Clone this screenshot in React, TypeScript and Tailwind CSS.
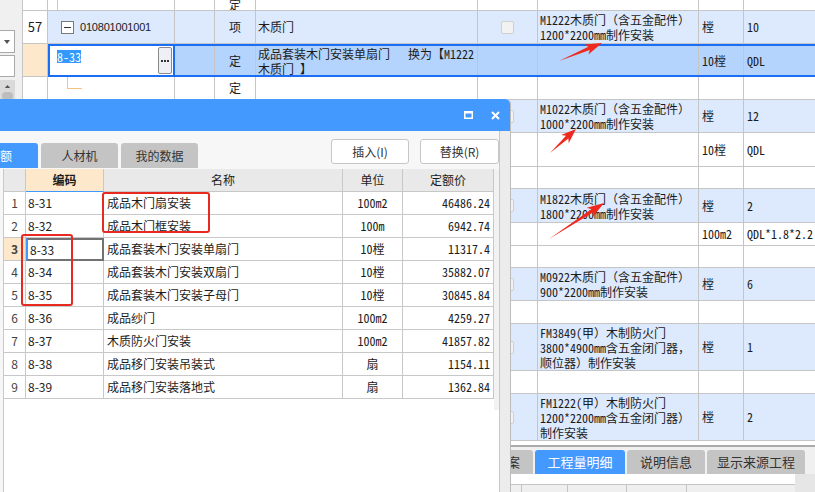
import React from 'react';

const SONG = "font-['Noto_Sans_Mono_CJK_SC','Liberation_Mono','Noto_Sans_CJK_SC',monospace]";
const HEI = "font-['Noto_Sans_CJK_SC','Noto_Sans',sans-serif]";
const LINE = 'border-[#c5c5c5]';
const BLUE_ROW = 'bg-[#dde9fc]';

// main grid column widths
const cols = ['w-[25px]', 'w-[127px]', 'w-[40px]', 'w-[41px]', 'w-[222px]', 'w-[60px]', 'w-[161px]', 'w-[45px]'];

type CellProps = { w: string; className?: string; children?: React.ReactNode };

function Cell({ w, className = '', children }: CellProps) {
  return (
    <div className={`${w} shrink-0 h-full border-r ${LINE} flex items-center overflow-hidden ${className}`}>
      {children}
    </div>
  );
}

const Check = () => <div className="w-[13px] h-[13px] rounded-[2px] border border-[#d0d0d0] bg-[#f2f2f2]" />;

type GRow = { h: string; blue?: boolean; desc?: string[]; unit?: string; qty?: string };

const lower: GRow[] = [
  { h: 'h-[33px]', blue: true, desc: ['M1022木质门（含五金配件）', '1000*2200mm制作安装'], unit: '樘', qty: '12' },
  { h: 'h-[34px]', unit: '10樘', qty: 'QDL' },
  { h: 'h-[22px]' },
  { h: 'h-[34px]', blue: true, desc: ['M1822木质门（含五金配件）', '1800*2200mm制作安装'], unit: '樘', qty: '2' },
  { h: 'h-[23px]', unit: '100m2', qty: 'QDL*1.8*2.2' },
  { h: 'h-[22px]' },
  { h: 'h-[33px]', blue: true, desc: ['M0922木质门（含五金配件）', '900*2200mm制作安装'], unit: '樘', qty: '6' },
  { h: 'h-[23px]' },
  { h: 'h-[47px]', blue: true, desc: ['FM3849(甲）木制防火门', '3800*4900mm含五金闭门器，', '顺位器）制作安装'], unit: '樘', qty: '1' },
  { h: 'h-[23px]' },
  { h: 'h-[47px]', blue: true, desc: ['FM1222(甲）木制防火门', '1200*2200mm含五金闭门器）', '制作安装'], unit: '樘', qty: '2' },
];

const items = [
  ['8-31', '成品木门扇安装', '100m2', '46486.24'],
  ['8-32', '成品木门框安装', '100m', '6942.74'],
  ['8-33', '成品套装木门安装单扇门', '10樘', '11317.4'],
  ['8-34', '成品套装木门安装双扇门', '10樘', '35882.07'],
  ['8-35', '成品套装木门安装子母门', '10樘', '30845.84'],
  ['8-36', '成品纱门', '100m2', '4259.27'],
  ['8-37', '木质防火门安装', '100m2', '41857.82'],
  ['8-38', '成品移门安装吊装式', '扇', '1154.11'],
  ['8-39', '成品移门安装落地式', '扇', '1362.84'],
];

const dcols = ['w-[22px]', 'w-[78px]', 'w-[239px]', 'w-[60px]', 'w-[91px]'];
const DL = 'border-[#c8c8c8]';

function arrow(x1: number, y1: number, x2: number, y2: number, head = 14) {
  const dx = x2 - x1;
  const dy = y2 - y1;
  const L = Math.hypot(dx, dy);
  const ux = dx / L;
  const uy = dy / L;
  const nx = -uy;
  const ny = ux;
  const bx = x2 - ux * head;
  const by = y2 - uy * head;
  const cx = x2 - ux * (head + 3);
  const cy = y2 - uy * (head + 3);
  const p = (x: number, y: number) => `${x.toFixed(1)},${y.toFixed(1)}`;
  return [
    p(x1, y1),
    p(bx + nx * 1.8, by + ny * 1.8),
    p(cx + nx * 5.5, cy + ny * 5.5),
    p(x2, y2),
    p(cx - nx * 5.5, cy - ny * 5.5),
    p(bx - nx * 1.8, by - ny * 1.8),
  ].join(' ');
}

function LeftPanel() {
  return (
    <div className={`w-[23px] shrink-0 bg-[#f0f0f0] border-r ${LINE} flex flex-col`}>
      <div className="mt-[30px] w-[15px] h-[23px] bg-white border border-l-0 border-[#a9a9a9] flex items-center justify-center">
        <svg width="6" height="4" viewBox="0 0 6 4">
          <path d="M0 0h6L3 4z" fill="#555" />
        </svg>
      </div>
      <div className="mt-[2px] w-[15px] h-[22px] bg-white border border-l-0 border-[#a9a9a9]" />
      <div className="mt-[3px] w-[15px] h-[20px] bg-[#dadada] flex flex-col items-center pt-[5px] gap-[4px]">
        <svg width="9" height="5" viewBox="0 0 9 5">
          <path d="M0 5L4.5 0L9 5z" fill="#555" />
        </svg>
        <div className="w-[11px] h-[11px] rounded-full bg-[#bdbdbd]" />
      </div>
    </div>
  );
}

function MainGrid() {
  return (
    <div className={`flex-1 flex flex-col bg-white text-[12px] text-[#1c1c1c] ${SONG}`}>
      {/* partial row at the top */}
      <div className={`flex h-[11px] border-b ${LINE}`}>
        <Cell w={cols[0]} />
        <Cell w={cols[1]} className="items-stretch">
          <div className="ml-[9px] w-px bg-[#f7c27f]" />
        </Cell>
        <Cell w={cols[2]} />
        <Cell w={cols[3]} className="justify-center items-end">
          <span className="leading-[14px] -mb-[2px]">定</span>
        </Cell>
        <Cell w={cols[4]} />
        <Cell w={cols[5]} />
        <Cell w={cols[6]} />
        <Cell w={cols[7]} />
      </div>

      {/* row 57 */}
      <div className={`flex h-[33px] border-b ${LINE}`}>
        <Cell w={cols[0]} className={`justify-center bg-white ${HEI} text-[13px]`}>57</Cell>
        <div className={`flex flex-1 ${BLUE_ROW}`}>
          <Cell w={cols[1]} className="pl-[13px] gap-[6px]">
            <div className="w-[13px] h-[13px] border border-[#7a7a7a] bg-white flex items-center justify-center">
              <div className="w-[7px] h-px bg-[#333]" />
            </div>
            <span className="font-['Liberation_Sans',sans-serif] text-[11px] tracking-[-0.2px]">010801001001</span>
          </Cell>
          <Cell w={cols[2]} />
          <Cell w={cols[3]} className="justify-center">项</Cell>
          <Cell w={cols[4]} className="pl-[2px]">木质门</Cell>
          <Cell w={cols[5]} className="justify-center">
            <Check />
          </Cell>
          <Cell w={cols[6]} className="pl-[2px]">
            <div className="leading-[15px] whitespace-nowrap">
              M1222木质门（含五金配件）
              <br />
              1200*2200mm制作安装
            </div>
          </Cell>
          <Cell w={cols[7]} className="pl-[3px]">樘</Cell>
          <div className="flex-1 flex items-center pl-[3px]">10</div>
        </div>
      </div>

      {/* selected row */}
      <div className="flex h-[33px]">
        <Cell w={cols[0]} className={`bg-[#fde8cb] border-b ${LINE}`} />
        <div className={`${cols[1]} shrink-0 h-full bg-white border-2 border-[#1a6ef5] flex items-start justify-between pl-[7px] pt-[4px] pr-px`}>
          <span className="bg-[#3399ff] text-white leading-[13px]">8-33</span>
          <div className="w-[14px] h-[27px] -mt-[3px] rounded-[2px] border border-[#8a8a8a] bg-[#eef0f6] flex items-center justify-center gap-px">
            <div className="w-[2px] h-[2px] bg-[#333]" />
            <div className="w-[2px] h-[2px] bg-[#333]" />
            <div className="w-[2px] h-[2px] bg-[#333]" />
          </div>
        </div>
        <div className="flex flex-1 bg-[#b4d4fd] border-y-2 border-[#1a6ef5]">
          <Cell w={cols[2]} />
          <Cell w={cols[3]} className="justify-center">定</Cell>
          <Cell w={cols[4]} className="pl-[2px]">
            <div className="leading-[15px] whitespace-pre">
              {'成品套装木门安装单扇门\u3000 换为【M1222'}
              <br />
              {'木质门 】'}
            </div>
          </Cell>
          <Cell w={cols[5]} />
          <Cell w={cols[6]} />
          <Cell w={cols[7]} className="pl-[3px]">10樘</Cell>
          <div className="flex-1 flex items-center pl-[3px]">QDL</div>
        </div>
      </div>

      {/* child row with tree branch */}
      <div className={`flex h-[23px] border-b ${LINE}`}>
        <Cell w={cols[0]} />
        <Cell w={cols[1]} className="items-start">
          <div className="ml-[19px] w-[15px] h-[12px] border-l border-b border-[#f7c27f]" />
        </Cell>
        <Cell w={cols[2]} />
        <Cell w={cols[3]} className="justify-center">定</Cell>
        <Cell w={cols[4]} />
        <Cell w={cols[5]} />
        <Cell w={cols[6]} />
        <Cell w={cols[7]} />
      </div>

      {lower.map((r, i) => (
        <div key={i} className={`flex ${r.h} border-b ${LINE} ${r.blue ? BLUE_ROW : 'bg-white'}`}>
          <Cell w={cols[0]} className="bg-white" />
          <Cell w={cols[1]} />
          <Cell w={cols[2]} />
          <Cell w={cols[3]} />
          <Cell w={cols[4]} />
          <Cell w={cols[5]} className="justify-center">
            {r.blue && <Check />}
          </Cell>
          <Cell w={cols[6]} className="pl-[2px]">
            {r.desc && (
              <div className="leading-[15px] whitespace-nowrap">
                {r.desc.map((d, j) => (
                  <div key={j}>{d}</div>
                ))}
              </div>
            )}
          </Cell>
          <Cell w={cols[7]} className="pl-[3px]">{r.unit}</Cell>
          <div className="flex-1 flex items-center pl-[3px] whitespace-nowrap">{r.qty}</div>
        </div>
      ))}
    </div>
  );
}

function BottomTabs() {
  const tabs = [
    { t: '组价方案', w: 'w-[78px]' },
    { t: '工程量明细', w: 'w-[90px]', active: true },
    { t: '说明信息', w: 'w-[78px]' },
    { t: '显示来源工程', w: 'w-[98px]' },
  ];
  return (
    <>
      <div className="h-[2px] bg-[#ababab]" />
      <div className={`h-[30px] bg-[#f0f0f0] flex items-end pl-[455px] gap-[2px] text-[13px] ${HEI}`}>
        {tabs.map((t) => (
          <div
            key={t.t}
            className={`${t.w} h-[24px] rounded-t-[3px] flex items-center justify-center ${
              t.active ? 'bg-[#4499ff] text-white' : 'bg-[#c4c4c4] text-[#333]'
            }`}
          >
            {t.t}
          </div>
        ))}
      </div>
      <div className="flex-1 flex">
        <div className="flex-1 bg-white pt-[10px]">
          <div className={`flex h-[8px] bg-[#efefef] border-t ${LINE}`}>
            <div className={`w-[522px] border-r ${LINE}`} />
            <div className={`w-[46px] border-r ${LINE}`} />
            <div className={`w-[59px] border-r ${LINE}`} />
            <div className={`w-[60px] border-r ${LINE}`} />
          </div>
        </div>
        <div className="w-[20px] bg-[#e6e6e6]" />
      </div>
    </>
  );
}

function Dialog() {
  return (
    <div className={`absolute left-0 top-[99px] w-[511px] h-[393px] flex flex-col bg-[#ececec] border-r border-[#bcbcbc] rounded-tr-[5px] ${HEI}`}>
      <div className="h-[32px] shrink-0 bg-[#4499ff] rounded-tr-[5px] flex items-center justify-end pr-[10px] gap-[18px]">
        <svg width="9" height="8" viewBox="0 0 9 8">
          <rect x="0.75" y="1.25" width="7.5" height="6" fill="none" stroke="#fff" strokeWidth="1.5" />
          <rect x="0" y="0" width="9" height="2.5" fill="#fff" />
        </svg>
        <svg width="9" height="9" viewBox="0 0 9 9">
          <path d="M1 1L8 8M8 1L1 8" stroke="#fff" strokeWidth="2" />
        </svg>
      </div>

      <div className={`flex-1 w-[500px] bg-[#f7f7f7] border-r ${DL} flex flex-col pl-[3px]`}>
        {/* toolbar */}
        <div className="h-[38px] shrink-0 flex items-start text-[12px] text-[#333]">
          <div className="mt-[12px] flex gap-[3px] -ml-[41px]">
            <div className="w-[76px] h-[25px] rounded-t-[3px] bg-[#4499ff] text-white flex items-center justify-center">定额</div>
            <div className="w-[77px] h-[25px] rounded-t-[3px] bg-[#c4c4c4] flex items-center justify-center">人材机</div>
            <div className="w-[77px] h-[25px] rounded-t-[3px] bg-[#c4c4c4] flex items-center justify-center">我的数据</div>
          </div>
          <div className="ml-auto mt-[8px] flex gap-[11px]">
            <div className="w-[78px] h-[25px] rounded-[3px] bg-white border border-[#c6c6c6] flex items-center justify-center">插入(I)</div>
            <div className="w-[79px] h-[25px] rounded-[3px] bg-white border border-[#c6c6c6] flex items-center justify-center">替换(R)</div>
          </div>
        </div>

        {/* quota table */}
        <div className={`flex-1 flex bg-white border-l ${DL}`}>
          <div className="w-[490px] shrink-0 text-[12px] text-[#1c1c1c]">
            <div className="flex h-[23px] bg-[#e9e9e9]">
              <div className={`${dcols[0]} border-r border-b ${DL}`} />
              <div className={`${dcols[1]} border-r ${DL} border-b border-b-[#3d9bff] bg-[#fde8cb] font-bold flex items-center justify-center`}>编码</div>
              <div className={`${dcols[2]} border-r border-b ${DL} flex items-center justify-center`}>名称</div>
              <div className={`${dcols[3]} border-r border-b ${DL} flex items-center justify-center`}>单位</div>
              <div className={`${dcols[4]} border-r border-b ${DL} flex items-center justify-center`}>定额价</div>
            </div>
            {items.map((it, i) => {
              const sel = i === 2;
              return (
                <div key={it[0]} className="flex h-[23px]">
                  <div
                    className={`${dcols[0]} border-r border-b ${DL} flex items-center justify-center text-[#444] ${
                      sel ? 'bg-[#fde8cb] font-bold text-[#111]' : ''
                    }`}
                  >
                    {i + 1}
                  </div>
                  <div
                    className={`${dcols[1]} flex items-center pl-[2px] ${
                      sel ? 'border-2 border-[#727272] border-l-[#3d9bff]' : `border-r border-b ${DL}`
                    }`}
                  >
                    {it[0]}
                  </div>
                  <div className={`${dcols[2]} border-r border-b ${DL} flex items-center pl-[3px]`}>{it[1]}</div>
                  <div className={`${dcols[3]} border-r border-b ${DL} flex items-center justify-center ${SONG}`}>{it[2]}</div>
                  <div className={`${dcols[4]} border-r border-b ${DL} flex items-center justify-end pr-[3px] ${SONG}`}>{it[3]}</div>
                </div>
              );
            })}
          </div>
          <div className="flex-1 h-[241px] bg-[#f2f2f2]" />
        </div>
      </div>
    </div>
  );
}

function Annotations() {
  return (
    <>
      <div className="absolute left-[102px] top-[192px] w-[108px] h-[41px] border-2 border-[#e8291f] rounded-[3px]" />
      <div className="absolute left-[21px] top-[234px] w-[52px] h-[72px] border-2 border-[#e8291f] rounded-[3px]" />
      <svg className="absolute inset-0 pointer-events-none" width="815" height="492">
        <polygon points={arrow(559, 61, 602, 43)} fill="#ee2a1e" />
        <polygon points={arrow(550, 153, 576, 129, 12)} fill="#ee2a1e" />
        <polygon points={arrow(549, 239, 604, 203)} fill="#ee2a1e" />
      </svg>
    </>
  );
}

export default function App() {
  return (
    <div className="relative w-[815px] h-[492px] overflow-hidden bg-white flex flex-col">
      <div className="h-[445px] shrink-0 flex">
        <LeftPanel />
        <MainGrid />
      </div>
      <BottomTabs />
      <Dialog />
      <Annotations />
    </div>
  );
}
